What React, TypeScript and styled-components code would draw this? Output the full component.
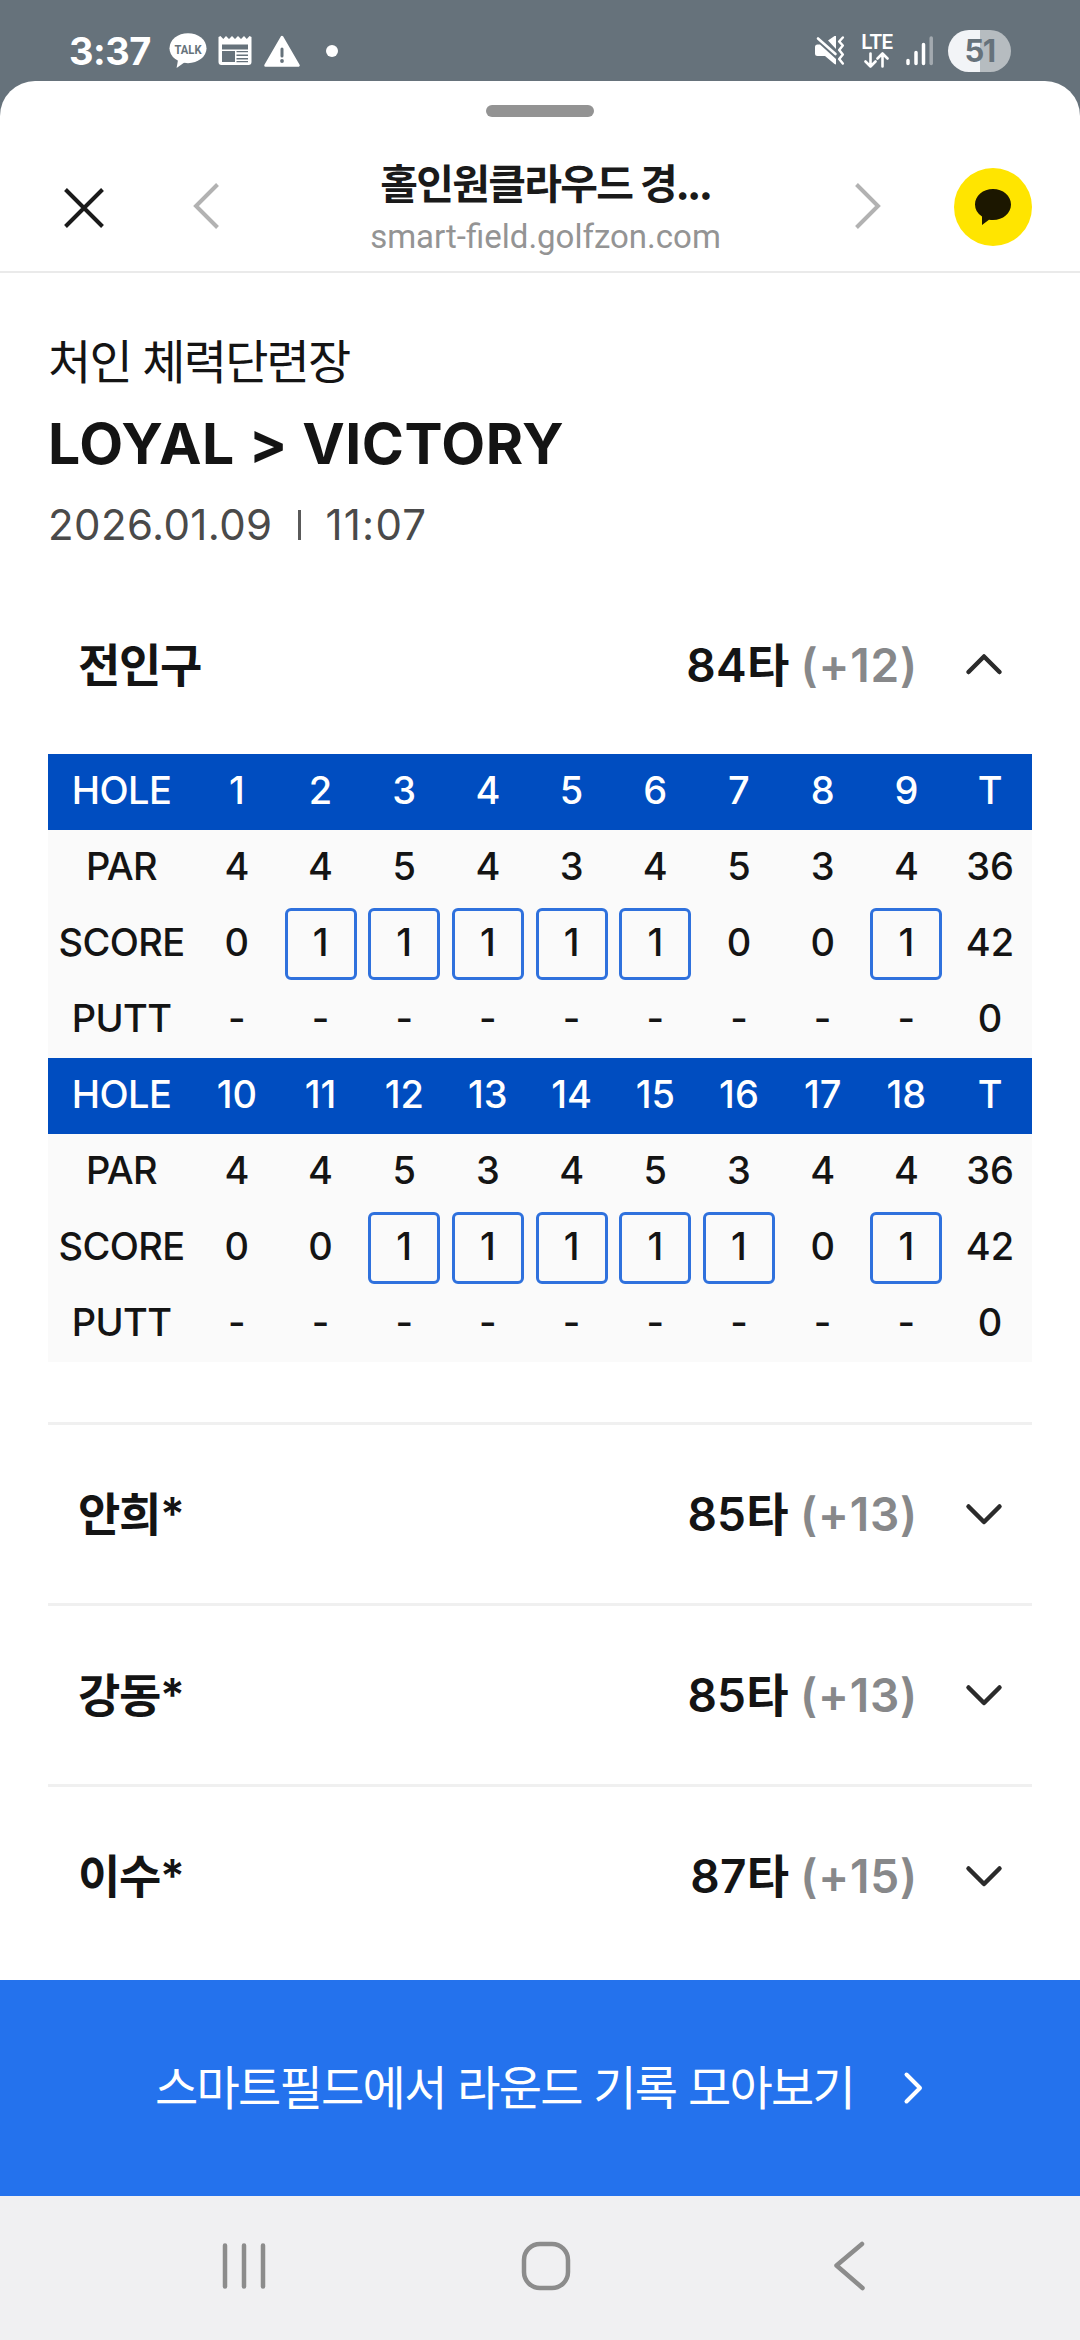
import React from "react";
import styled, { createGlobalStyle } from "styled-components";

const GlobalStyle = createGlobalStyle`
  * { box-sizing: border-box; }
  body { margin: 0; background: #66727b; }
  button { border: 0; padding: 0; background: none; font: inherit; color: inherit; }
`;

const sans = `Inter, "Noto Sans CJK KR", sans-serif`;

const Screen = styled.div`
  width: 1080px;
  height: 2340px;
  display: flex;
  flex-direction: column;
  background: #66727b;
  font-family: ${sans};
  font-optical-sizing: none;
  color: #141414;
  overflow: hidden;
`;

const StatusBar = styled.header`
  height: 81px;
  flex: none;
  display: flex;
  justify-content: space-between;
  padding: 30px 69px 9px 69px;
  color: #fff;
`;

const StatusGroup = styled.div`
  display: flex;
  align-items: center;
  height: 42px;
`;

const Clock = styled.span`
  width: 100px;
  font-size: 38px;
  font-weight: 700;
  line-height: 42px;
  letter-spacing: -0.5px;
`;

const StatusGlyph = styled.svg<{ $gap?: number }>`
  flex: none;
  margin-left: ${(p) => p.$gap ?? 0}px;
`;

const Dot = styled.span`
  width: 12px;
  height: 12px;
  margin-left: 26px;
  border-radius: 50%;
  background: #fff;
`;

const Network = styled.span`
  display: flex;
  flex-direction: column;
  align-items: center;
  width: 34px;
  height: 42px;
  margin-left: 15px;
`;

const NetworkLabel = styled.span`
  height: 22px;
  font-family: Roboto, sans-serif;
  font-size: 20.5px;
  font-weight: 600;
  line-height: 24px;
  letter-spacing: -0.5px;
`;

const Battery = styled.span`
  width: 63px;
  height: 42px;
  margin-left: 14px;
  border-radius: 21px;
  background: linear-gradient(90deg, #f2f4f7 51%, #b6bcc0 51%);
  color: #66727b;
  font-size: 31px;
  font-weight: 700;
  line-height: 41px;
  letter-spacing: -1.5px;
  text-align: center;
`;

const Sheet = styled.main`
  flex: none;
  height: 2115px;
  display: flex;
  flex-direction: column;
  border-radius: 35px 35px 0 0;
  background: #fff;
`;

const Handle = styled.div`
  width: 108px;
  height: 12px;
  margin: 24px auto 0;
  border-radius: 6px;
  background: #939393;
`;

const Toolbar = styled.nav`
  height: 156px;
  display: flex;
  align-items: flex-start;
  padding: 37px 48px 0 64px;
  border-bottom: 2px solid #eaeaea;
`;

const IconButton = styled.button<{ $w: number; $h: number; $ml?: number; $mt?: number }>`
  flex: none;
  display: flex;
  width: ${(p) => p.$w}px;
  height: ${(p) => p.$h}px;
  margin-left: ${(p) => p.$ml ?? 0}px;
  margin-top: ${(p) => p.$mt ?? 0}px;
`;

const PageInfo = styled.div`
  flex: 1;
  display: flex;
  flex-direction: column;
  align-items: center;
  padding-left: 17px;
  white-space: nowrap;
`;

const PageTitle = styled.h1`
  margin: 2px 0 0;
  font-family: "Noto Sans CJK KR", sans-serif;
  font-size: 41px;
  font-weight: 700;
  line-height: 50px;
  letter-spacing: -1.7px;
  color: #1a1a1a;
`;

const PageUrl = styled.span`
  margin-top: 11px;
  font-family: Roboto, sans-serif;
  font-size: 33px;
  line-height: 40px;
  color: #949494;
`;

const TalkButton = styled.button`
  flex: none;
  width: 78px;
  height: 78px;
  margin-top: 14px;
  margin-left: 73px;
  display: flex;
  align-items: center;
  justify-content: center;
  border-radius: 50%;
  background: #ffe500;
`;

const Content = styled.section`
  flex: 1;
  display: flex;
  flex-direction: column;
  padding: 54px 48px 0;
`;

const Venue = styled.p`
  margin: 0;
  font-size: 47px;
  line-height: 70px;
  letter-spacing: -1.8px;
`;

const Course = styled.h2`
  margin: 12px 0 0;
  font-size: 57px;
  font-weight: 700;
  line-height: 70px;
  letter-spacing: 0.55px;
`;

const DateLine = styled.p`
  display: flex;
  align-items: center;
  margin: 16px 0 0;
  font-size: 42px;
  line-height: 60px;
  letter-spacing: 0.4px;
  color: #4a4a4a;
`;

const DateBar = styled.i`
  width: 3px;
  height: 30px;
  margin: 0 25px;
  background: #5a5a5a;
`;

const Time = styled.span`
  letter-spacing: 1.2px;
`;

const PlayerHead = styled.div`
  display: flex;
  align-items: center;
  height: 178px;
  padding: 0 27px 0 30px;
  font-size: 46px;
  font-weight: 600;
`;

const PlayerCard = styled.article<{ $first?: boolean }>`
  margin-top: ${(p) => (p.$first ? 21 : 0)}px;
  border-top: ${(p) => (p.$first ? 0 : 3)}px solid #f0f0f0;
`;

const PlayerName = styled.span`
  flex: 1;
  line-height: 60px;
  letter-spacing: -1.3px;
`;

const Strokes = styled.span`
  line-height: 60px;
  letter-spacing: 0.3px;
`;

const Diff = styled.span`
  margin-left: 11px;
  line-height: 60px;
  letter-spacing: 0.8px;
  color: #87888a;
`;

const ChevronSlot = styled.span`
  display: flex;
  margin-left: 45px;
`;

const ScoreCard = styled.div`
  margin-bottom: 60px;
  background: #fafafa;
`;

const ScoreRow = styled.div<{ $head?: boolean }>`
  display: grid;
  grid-template-columns: 147px repeat(10, 83.7px);
  height: 76px;
  align-items: start;
  justify-items: center;
  font-size: 38px;
  font-weight: 500;
  line-height: 72px;
  background: ${(p) => (p.$head ? "#004dc0" : "transparent")};
  color: ${(p) => (p.$head ? "#fff" : "#141414")};
`;

const RowLabel = styled.span`
  letter-spacing: -0.6px;
`;

const Bogey = styled.span`
  width: 72px;
  height: 72px;
  margin-top: 2px;
  border: 3px solid #2f71dd;
  border-radius: 6px;
  line-height: 62px;
  text-align: center;
`;

const CollectBanner = styled.button`
  flex: none;
  display: flex;
  align-items: center;
  justify-content: center;
  gap: 49px;
  height: 216px;
  background: #2472ed;
  color: #fff;
  font-size: 47px;
  letter-spacing: -1.7px;
`;

const BannerLabel = styled.span`
  padding-bottom: 8px;
`;

const NavBar = styled.footer`
  flex: none;
  height: 144px;
  display: flex;
  align-items: flex-start;
  padding: 43px 213px 0 219px;
  background: #f0f0f2;
`;

const HomeIcon = styled.svg`
  margin: 0 258px 0 250px;
`;

const TalkStatusIcon = () => (
  <StatusGlyph width="38" height="36" viewBox="0 0 38 36">
    <ellipse cx="19" cy="15.2" rx="18.5" ry="15" fill="#fff" />
    <path d="M9 27 7.6 35 16 29z" fill="#fff" />
    <text x="19" y="20.5" textAnchor="middle" fontFamily="Roboto, sans-serif" fontWeight="700" fontSize="13.5" textLength="27" lengthAdjust="spacingAndGlyphs" fill="#66727b">TALK</text>
  </StatusGlyph>
);

const NewsIcon = () => (
  <StatusGlyph $gap={11} width="34" height="30" viewBox="0 0 34 30">
    <path d="M.5 1 2.5 0l2.8 3L8 0l3 3 3-3 3 3 3-3 3 3 3-3 2.8 3L31.500 0l2 1v25q0 3-3 3h-27q-3 0-3-3z" fill="#fff" />
    <path d="M4 8.500h26v5H4zM4 15h13v11H4zM18.500 15h11.500v1.200H18.500zM18.500 18.500h11.500v1.500H18.500zM18.500 22h11.500v1.400H18.500zM18.500 25h11.500v1.200H18.500z" fill="#66727b" />
  </StatusGlyph>
);

const WarningIcon = () => (
  <StatusGlyph $gap={12} width="36" height="33" viewBox="0 0 36 33">
    <path d="M18 2 34.500 30.500h-33z" fill="#fff" stroke="#fff" strokeWidth="2.500" strokeLinejoin="round" />
    <path d="M18 14v7" stroke="#66727b" strokeWidth="3" strokeLinecap="round" />
    <circle cx="18" cy="26" r="1.900" fill="#66727b" />
  </StatusGlyph>
);

const MuteVibrateIcon = () => (
  <StatusGlyph width="30" height="30" viewBox="0 0 30 30">
    <path d="M13 4.500 19.500 0H21v13zM0 11q0-2.500 2.500-2.500H5L21 23v5.500L19.500 28 10 20H2.500Q0 20 0 17.500z" fill="#fff" />
    <path d="M3 2.500 20.500 18" stroke="#fff" strokeWidth="2.600" strokeLinecap="round" />
    <path d="m27.800 1.500-3.600 4 3.600 4-3.600 4.500 3.600 4.500-3.600 4.500 3.600 4.500" fill="none" stroke="#fff" strokeWidth="2.500" strokeLinecap="round" strokeLinejoin="round" />
  </StatusGlyph>
);

const LteIcon = () => (
  <Network>
    <NetworkLabel>LTE</NetworkLabel>
    <StatusGlyph width="34" height="17" viewBox="0 19 34 17">
      <path d="M10.500 20.500v13M5.500 28.500l5 5 5-5M22.500 33.500v-13M17.500 25.500l5-5 5 5" fill="none" stroke="#fff" strokeWidth="2.600" strokeLinecap="round" strokeLinejoin="round" />
    </StatusGlyph>
  </Network>
);

const SignalIcon = () => (
  <StatusGlyph $gap={12} width="28" height="30" viewBox="0 0 28 30">
    <g stroke="#fff" strokeWidth="3.500" strokeLinecap="round">
      <path d="M2 24.500v3M10 16.500v11M17.500 8.500v19" />
      <path d="M25.200 2v25.500" opacity=".4" />
    </g>
  </StatusGlyph>
);

const Chevron = ({ up }: { up?: boolean }) => (
  <svg width="42" height="30" viewBox="0 0 42 30">
    <path d={up ? "M5.500 22 21 6.500 36.500 22" : "M5.500 7.500 21 23 36.500 7.500"} fill="none" stroke="#2b2b2b" strokeWidth="4.500" strokeLinecap="round" strokeLinejoin="round" />
  </svg>
);

interface Half {
  hole: number[];
  par: number[];
  score: number[];
}

const halves: Half[] = [
  { hole: [1, 2, 3, 4, 5, 6, 7, 8, 9], par: [4, 4, 5, 4, 3, 4, 5, 3, 4], score: [0, 1, 1, 1, 1, 1, 0, 0, 1] },
  { hole: [10, 11, 12, 13, 14, 15, 16, 17, 18], par: [4, 4, 5, 3, 4, 5, 3, 4, 4], score: [0, 0, 1, 1, 1, 1, 1, 0, 1] },
];

const players = [
  { name: "전인구", strokes: 84, diff: 12, open: true },
  { name: "안희*", strokes: 85, diff: 13 },
  { name: "강동*", strokes: 85, diff: 13 },
  { name: "이수*", strokes: 87, diff: 15 },
];

const HalfTable = ({ half }: { half: Half }) => (
  <>
    <ScoreRow $head>
      <RowLabel>HOLE</RowLabel>
      {half.hole.map((n) => <span key={n}>{n}</span>)}
      <span>T</span>
    </ScoreRow>
    <ScoreRow>
      <RowLabel>PAR</RowLabel>
      {half.par.map((n, i) => <span key={i}>{n}</span>)}
      <span>36</span>
    </ScoreRow>
    <ScoreRow>
      <RowLabel>SCORE</RowLabel>
      {half.score.map((n, i) => (n > 0 ? <Bogey key={i}>{n}</Bogey> : <span key={i}>{n}</span>))}
      <span>42</span>
    </ScoreRow>
    <ScoreRow>
      <RowLabel>PUTT</RowLabel>
      {half.hole.map((n) => <span key={n}>-</span>)}
      <span>0</span>
    </ScoreRow>
  </>
);

export default function App() {
  return (
    <Screen>
      <GlobalStyle />
      <StatusBar>
        <StatusGroup>
          <Clock>3:37</Clock>
          <TalkStatusIcon />
          <NewsIcon />
          <WarningIcon />
          <Dot />
        </StatusGroup>
        <StatusGroup>
          <MuteVibrateIcon />
          <LteIcon />
          <SignalIcon />
          <Battery>51</Battery>
        </StatusGroup>
      </StatusBar>
      <Sheet>
        <Handle />
        <Toolbar>
          <IconButton $w={40} $h={40} $mt={34}>
            <svg width="40" height="40" viewBox="0 0 40 40">
              <path d="M1.500 1.500l37 37M38.500 1.500l-37 37" stroke="#1a1a1a" strokeWidth="4" />
            </svg>
          </IconButton>
          <IconButton $w={27} $h={46} $ml={89} $mt={29}>
            <svg width="27" height="46" viewBox="0 0 27 46">
              <path d="M24.500 1.500 3 23l21.500 21.500" fill="none" stroke="#b2b2b2" strokeWidth="4" />
            </svg>
          </IconButton>
          <PageInfo>
            <PageTitle>홀인원클라우드 경...</PageTitle>
            <PageUrl>smart-field.golfzon.com</PageUrl>
          </PageInfo>
          <IconButton $w={27} $h={46} $mt={29}>
            <svg width="27" height="46" viewBox="0 0 27 46">
              <path d="M2.500 1.500 24 23 2.500 44.500" fill="none" stroke="#b2b2b2" strokeWidth="4" />
            </svg>
          </IconButton>
          <TalkButton>
            <svg width="36" height="36" viewBox="0 0 36 36">
              <path d="M18 0C28 0 36 6.800 36 15.500S28 31 18 31q-2 0-4-.3L7 36v-8.500Q0 23 0 15.500C0 6.800 8 0 18 0z" fill="#1c1700" />
            </svg>
          </TalkButton>
        </Toolbar>
        <Content>
          <Venue>처인 체력단련장</Venue>
          <Course>LOYAL &gt; VICTORY</Course>
          <DateLine>
            2026.01.09
            <DateBar />
            <Time>11:07</Time>
          </DateLine>
          {players.map((p, i) => (
            <PlayerCard key={p.name} $first={i === 0}>
              <PlayerHead>
                <PlayerName>{p.name}</PlayerName>
                <Strokes>{p.strokes}타</Strokes>
                <Diff>(+{p.diff})</Diff>
                <ChevronSlot>
                  <Chevron up={p.open} />
                </ChevronSlot>
              </PlayerHead>
              {p.open && (
                <ScoreCard>
                  {halves.map((h) => <HalfTable key={h.hole[0]} half={h} />)}
                </ScoreCard>
              )}
            </PlayerCard>
          ))}
        </Content>
        <CollectBanner>
          <BannerLabel>스마트필드에서 라운드 기록 모아보기</BannerLabel>
          <svg width="22" height="34" viewBox="0 0 22 34">
            <path d="M3.500 3.500 17 17 3.500 30.500" fill="none" stroke="#fff" strokeWidth="4" strokeLinecap="round" strokeLinejoin="round" />
          </svg>
        </CollectBanner>
      </Sheet>
      <NavBar>
        <svg width="50" height="54" viewBox="0 0 50 54">
          <path d="M6 6.500v41M25 6.500v41M44 6.500v41" stroke="#8c8c8c" strokeWidth="4.500" strokeLinecap="round" />
        </svg>
        <HomeIcon width="54" height="54" viewBox="0 0 54 54">
          <rect x="5" y="5" width="44" height="44" rx="16" fill="none" stroke="#8c8c8c" strokeWidth="4.500" />
        </HomeIcon>
        <svg width="36" height="54" viewBox="0 0 36 54">
          <path d="M31 5 5.500 26.500 31.500 49" fill="none" stroke="#8c8c8c" strokeWidth="4.500" strokeLinecap="round" strokeLinejoin="round" />
        </svg>
      </NavBar>
    </Screen>
  );
}
